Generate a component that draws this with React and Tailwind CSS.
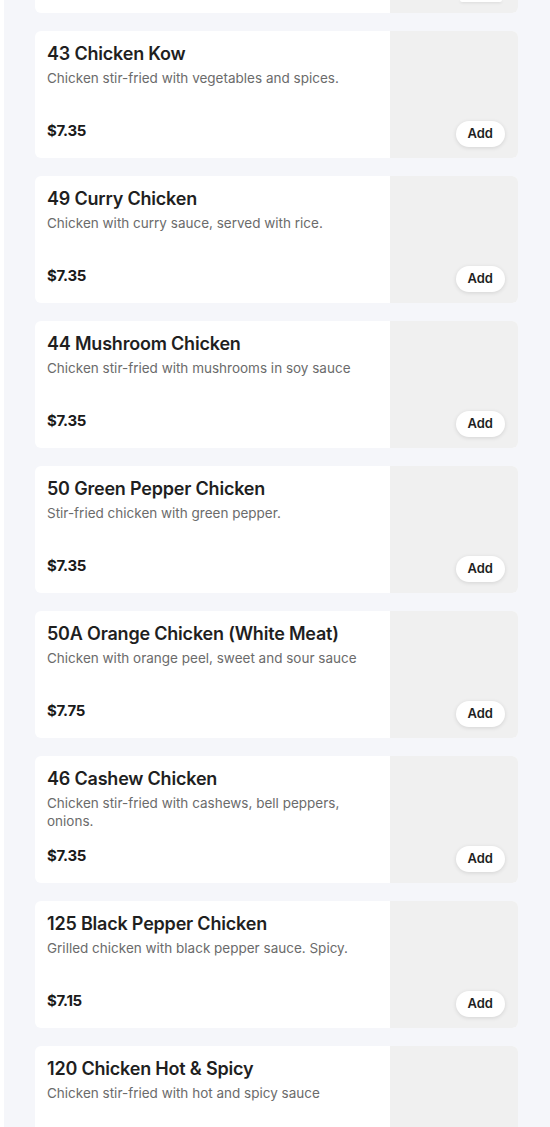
const ITEMS = [
  { name: '43 Chicken Kow', desc: 'Chicken stir-fried with vegetables and spices.', price: '$7.35' },
  { name: '49 Curry Chicken', desc: 'Chicken with curry sauce, served with rice.', price: '$7.35' },
  { name: '44 Mushroom Chicken', desc: 'Chicken stir-fried with mushrooms in soy sauce', price: '$7.35' },
  { name: '50 Green Pepper Chicken', desc: 'Stir-fried chicken with green pepper.', price: '$7.35' },
  { name: '50A Orange Chicken (White Meat)', desc: 'Chicken with orange peel, sweet and sour sauce', price: '$7.75' },
  { name: '46 Cashew Chicken', desc: 'Chicken stir-fried with cashews, bell peppers, onions.', price: '$7.35' },
  { name: '125 Black Pepper Chicken', desc: 'Grilled chicken with black pepper sauce. Spicy.', price: '$7.15' },
  { name: '120 Chicken Hot & Spicy', desc: 'Chicken stir-fried with hot and spicy sauce', price: '$7.35' },
];

function MenuCard({ item }) {
  return (
    <article className="flex h-[127px] overflow-hidden rounded-[6px] bg-white">
      <div className="flex min-w-0 flex-1 flex-col px-3 pt-[11px] pb-[17px]">
        <h3 className="text-[18px] leading-6 font-semibold tracking-[-0.2px] text-[#1f1f1f]">{item.name}</h3>
        <p className="mt-[3px] text-[13.5px] leading-[18px] text-[#6b6b6b]">{item.desc}</p>
        <p className="mt-auto text-[15px] leading-5 font-bold tracking-[-0.3px] text-[#1a1a1a]">{item.price}</p>
      </div>
      <div className="flex w-[128px] shrink-0 items-end justify-end bg-[#f0f0f0] px-[13px] pb-[11px]">
        <button className="h-[26px] rounded-full bg-white px-[12px] text-[13px] font-semibold text-[#1f1f1f] shadow-[0_1px_4px_rgba(0,0,0,0.12)]">
          Add
        </button>
      </div>
    </article>
  );
}

export default function App() {
  return (
    <div className="min-h-[1127px] bg-white pl-[4px] font-['Inter',sans-serif]">
      <div className="min-h-[1127px] bg-[#f5f6fa] pr-[32px] pl-[31px]">
        <div className="flex flex-col gap-[18px]">
          {/* tail of the card scrolled above the viewport */}
          <div className="flex h-[13px] overflow-hidden rounded-b-[6px] bg-white">
            <div className="flex-1" />
            <div className="flex w-[128px] shrink-0 justify-end bg-[#f0f0f0] pr-[16px]">
              <div className="h-[2px] w-[42px] rounded-b-full bg-white shadow-[0_1px_3px_rgba(0,0,0,0.1)]" />
            </div>
          </div>
          {ITEMS.map((item) => (
            <MenuCard key={item.name} item={item} />
          ))}
        </div>
      </div>
    </div>
  );
}
